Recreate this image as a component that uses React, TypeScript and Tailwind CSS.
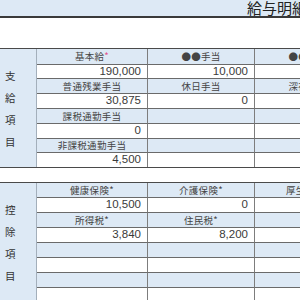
type Row = { header: boolean; h: number; cells: string[] };

const JP = "font-['Noto_Sans_CJK_JP','Noto_Sans',sans-serif]";
const NUM = "font-['Liberation_Sans','Noto_Sans_CJK_JP',sans-serif]";

const PAY: Row[] = [
  { header: true, h: 16, cells: ["基本給*", "●●手当", "●●手当"] },
  { header: false, h: 14, cells: ["190,000", "10,000", ""] },
  { header: true, h: 15, cells: ["普通残業手当", "休日手当", "深夜手当"] },
  { header: false, h: 15, cells: ["30,875", "0", ""] },
  { header: true, h: 15, cells: ["課税通勤手当", "", ""] },
  { header: false, h: 15, cells: ["0", "", ""] },
  { header: true, h: 14, cells: ["非課税通勤手当", "", ""] },
  { header: false, h: 14, cells: ["4,500", "", ""] },
];

const DEDUCT: Row[] = [
  { header: true, h: 15, cells: ["健康保険*", "介護保険*", "厚生年金*"] },
  { header: false, h: 15, cells: ["10,500", "0", ""] },
  { header: true, h: 15, cells: ["所得税*", "住民税*", ""] },
  { header: false, h: 15, cells: ["3,840", "8,200", ""] },
  { header: true, h: 15, cells: ["", "", ""] },
  { header: false, h: 15, cells: ["", "", ""] },
  { header: true, h: 15, cells: ["", "", ""] },
  { header: false, h: 15, cells: ["", "", ""] },
];

function Label({ text, redStar }: { text: string; redStar: boolean }) {
  if (!text.endsWith("*")) return <>{text}</>;
  return (
    <>
      {text.slice(0, -1)}
      <span className={redStar ? "text-[#e0508a]" : "text-[#444]"}>*</span>
    </>
  );
}

function Section({ title, rows }: { title: string; rows: Row[] }) {
  return (
    <div className="flex border-t border-b border-[#4a4a4a]">
      <div className="w-[37px] shrink-0 bg-[#dde9f5] border-r border-[#a3afbb] flex flex-col pt-[16px] pl-[5px]">
        {title.split("").map((c) => (
          <span key={c} className={`${JP} text-[10.5px] leading-[22px] text-[#333]`}>
            {c}
          </span>
        ))}
      </div>
      <div className="grid grid-cols-[111px_107px_107px] shrink-0">
        {rows.map((row, ri) =>
          row.cells.map((cell, ci) => (
            <div
              key={`${ri}-${ci}`}
              style={{ height: row.h }}
              className={[
                "flex items-center border-r border-[#7d7d7d] overflow-hidden whitespace-nowrap",
                ri < rows.length - 1 ? "border-b border-b-[#6a6a6a]" : "",
                row.header
                  ? `bg-[#dde9f5] justify-center ${JP} text-[9.5px] tracking-[0.3px] text-[#444]`
                  : `bg-white justify-end pr-[6px] ${NUM} text-[11.5px] text-[#3a3a3a]`,
              ].join(" ")}
            >
              <Label text={cell} redStar={cell === "基本給*"} />
            </div>
          ))
        )}
      </div>
    </div>
  );
}

export default function App() {
  return (
    <div className="w-[300px] h-[300px] overflow-hidden bg-white">
      <div className="h-[18px] bg-[#dde9f5] border-b-2 border-[#3a3a3a] flex justify-end">
        <span className={`${JP} text-[15px] leading-[16px] text-[#222] mr-[-7px] whitespace-nowrap`}>
          給与明細
        </span>
      </div>
      <div className="h-[30px]" />
      <Section title="支給項目" rows={PAY} />
      <div className="h-[14px]" />
      <Section title="控除項目" rows={DEDUCT} />
    </div>
  );
}
